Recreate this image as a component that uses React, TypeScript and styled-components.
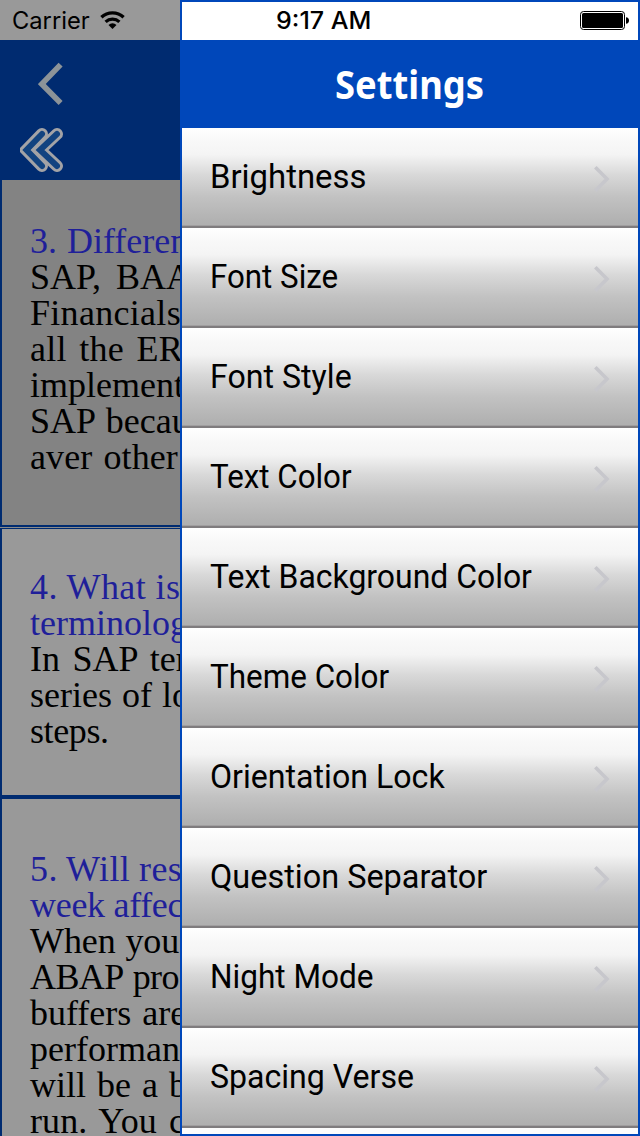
import { useLayoutEffect, useRef } from "react";
import styled, { createGlobalStyle } from "styled-components";

const BLUE = "#0047ba";
const DIM_BLUE = "#002b70";

const GlobalStyle = createGlobalStyle`
  *, *::before, *::after { box-sizing: border-box; }
  body { margin: 0; background: #fff; overflow: hidden; }
`;

const Screen = styled.div`
  display: flex;
  position: relative;
  width: 640px;
  height: 1136px;
  overflow: hidden;
  background: #fff;
`;

const Reader = styled.div`
  display: flex;
  flex-direction: column;
  width: 180px;
  flex: none;
  overflow: hidden;
`;

const Carrier = styled.div`
  display: flex;
  align-items: flex-start;
  gap: 10px;
  height: 40px;
  flex: none;
  padding: 0 0 0 12px;
  background: #999;
  color: #000;
  font: 400 24px/42px Inter, sans-serif;

  svg { margin-top: 10px; }
`;

const Toolbar = styled.div`
  display: flex;
  flex-direction: column;
  height: 140px;
  flex: none;
  background: ${DIM_BLUE};
`;

const ToolRow = styled.div<{ $h: number; $left: number; $top: number }>`
  height: ${(p) => p.$h}px;
  padding: ${(p) => p.$top}px 0 0 ${(p) => p.$left}px;
  line-height: 0;
`;

const Card = styled.article<{ $h: number; $shade: string; $top: number; $pad: number; $bottom: number }>`
  height: ${(p) => p.$h}px;
  flex: none;
  padding: ${(p) => p.$pad}px 0 0 28px;
  border: 0 solid ${DIM_BLUE};
  border-width: ${(p) => p.$top}px 0 ${(p) => p.$bottom}px 2px;
  background: ${(p) => p.$shade};
  color: #000;
  font: 400 36px/36px "Liberation Serif", serif;
  overflow: hidden;
`;

const Gap = styled.div`
  height: 1px;
  flex: none;
  background: #8a8a8a;
`;

const Line = styled.div<{ $question?: boolean; $word?: number; $letter?: number }>`
  white-space: nowrap;
  word-spacing: ${(p) => p.$word ?? 2}px;
  letter-spacing: ${(p) => p.$letter ?? 0}px;
  color: ${(p) => (p.$question ? "#1f1f99" : "#000")};
`;

const Panel = styled.aside`
  display: flex;
  flex-direction: column;
  width: 460px;
  flex: none;
  border: 2px solid ${BLUE};
  background: #fcfcfc;
  overflow: hidden;
`;

const StatusBar = styled.div`
  display: flex;
  justify-content: space-between;
  height: 38px;
  flex: none;
  padding: 0 9px 0 94px;
  background: #fff;
  color: #000;
  font: 500 24px/38px Inter, sans-serif;

  svg { margin-top: 9px; }
`;

const Header = styled.header`
  height: 88px;
  flex: none;
  padding-left: 153px;
  background: ${BLUE};
  color: #fff;
  font: 700 40px/87px "Noto Sans", sans-serif;
`;

const MenuRow = styled.div`
  display: flex;
  justify-content: space-between;
  height: 100px;
  flex: none;
  padding: 0 28px 0 28px;
  border-bottom: 2px solid #7f7c7e;
  box-shadow: inset 0 -1px #a09e9f;
  background: linear-gradient(#fff 0, #f8f8f8 14%, #f4f4f4 27%, #d8d8d8 48%, #c2c2c2 70%, #b0b0b0 97%);
  color: #000;
  font: 400 33.5px/98px Roboto, sans-serif;

  svg { margin-top: 37px; }
`;

const FittedText = styled.span`
  display: inline-block;
  align-self: flex-start;
  white-space: nowrap;
  transform-origin: left center;
`;

function Fit({ width, children }: { width: number; children: string }) {
  const ref = useRef<HTMLSpanElement>(null);
  useLayoutEffect(() => {
    const el = ref.current;
    if (!el) return;
    el.style.transform = `scaleX(${width / el.offsetWidth})`;
    el.style.marginRight = `${width - el.offsetWidth}px`;
  }, [width, children]);
  return <FittedText ref={ref}>{children}</FittedText>;
}

const WifiIcon = () => (
  <svg width="26" height="20" viewBox="0 0 26 20" fill="none" stroke="#000" strokeWidth="3.3">
    <path d="M1.4 7.3a16.2 16.2 0 0 1 22.2 0" />
    <path d="M5.6 11.9a10.2 10.2 0 0 1 13.8 0" />
    <path d="M12.5 19l-4-4.1a6 6 0 0 1 8 0z" fill="#000" stroke="none" />
  </svg>
);

const BatteryIcon = () => (
  <svg width="49" height="19" viewBox="0 0 49 19">
    <rect x="0.5" y="0.5" width="44" height="18" rx="3" fill="none" stroke="#000" />
    <rect x="2" y="2" width="41" height="15" rx="1.5" />
    <path d="M46 6.2c4 .2 4 6.4 0 6.6z" />
  </svg>
);

const BackIcon = () => (
  <svg width="26" height="44" viewBox="0 0 26 44" fill="none" stroke="#8c9398" strokeWidth="5.6">
    <path d="M22.6 2.6L3.8 22L22.6 41" />
  </svg>
);

const FirstIcon = () => (
  <svg width="44" height="44" viewBox="0 0 44 44" fill="none" strokeLinecap="round" strokeLinejoin="miter">
    {["M22 6L6.5 22L22 38", "M37 6L20 22L37 38"].map((d) => (
      <g key={d}>
        <path d={d} stroke="#a3a3a6" strokeWidth="12" />
        <path d={d} stroke="#124380" strokeWidth="6" />
      </g>
    ))}
  </svg>
);

const DisclosureIcon = () => (
  <svg width="17" height="28" viewBox="0 0 17 28" fill="none" stroke="#c7c7cc" strokeWidth="3.6">
    <path d="M2.3 2.3L14 14L2.3 25.7" />
  </svg>
);

const MENU: [string, number][] = [
  ["Brightness", 156],
  ["Font Size", 128],
  ["Font Style", 142],
  ["Text Color", 142],
  ["Text Background Color", 322],
  ["Theme Color", 179],
  ["Orientation Lock", 235],
  ["Question Separator", 277],
  ["Night Mode", 164],
  ["Spacing Verse", 204],
];

export default function App() {
  return (
    <>
      <GlobalStyle />
      <Screen>
        <Reader>
          <Carrier>
            <Fit width={78}>Carrier</Fit>
            <WifiIcon />
          </Carrier>
          <Toolbar>
            <ToolRow $h={88} $left={38} $top={22}><BackIcon /></ToolRow>
            <ToolRow $h={52} $left={20} $top={0}><FirstIcon /></ToolRow>
          </Toolbar>
          <Card $h={347} $shade="#838383" $top={0} $pad={43} $bottom={2}>
            <Line $question $word={1}>3. Differen</Line>
            <Line $word={6}>SAP, BAA</Line>
            <Line $letter={0.3}>Financials</Line>
            <Line $word={3.5} $letter={0.2}>all the ER</Line>
            <Line>implement</Line>
            <Line>SAP becau</Line>
            <Line $letter={0.1}>aver other</Line>
          </Card>
          <Gap />
          <Card $h={269} $shade="#999" $top={1} $pad={40} $bottom={2}>
            <Line $question $word={0} $letter={0.4}>4. What is</Line>
            <Line $question>terminolog</Line>
            <Line $word={3.5}>In SAP ter</Line>
            <Line $word={1}>series of lo</Line>
            <Line $letter={-0.4}>steps.</Line>
          </Card>
          <Card $h={339} $shade="#999" $top={2} $pad={52} $bottom={0}>
            <Line $question $word={-0.5} $letter={0.4}>5. Will res</Line>
            <Line $question $word={0} $letter={-0.3}>week affec</Line>
            <Line $word={1} $letter={-0.1}>When you</Line>
            <Line $letter={-0.6}>ABAP pro</Line>
            <Line>buffers are</Line>
            <Line>performan</Line>
            <Line>will be a b</Line>
            <Line $word={3} $letter={0.1}>run. You c</Line>
          </Card>
        </Reader>
        <Panel>
          <StatusBar>
            <Fit width={95}>9:17 AM</Fit>
            <BatteryIcon />
          </StatusBar>
          <Header><Fit width={149}>Settings</Fit></Header>
          {MENU.map(([label, width]) => (
            <MenuRow key={label}>
              <Fit width={width}>{label}</Fit>
              <DisclosureIcon />
            </MenuRow>
          ))}
        </Panel>
      </Screen>
    </>
  );
}
